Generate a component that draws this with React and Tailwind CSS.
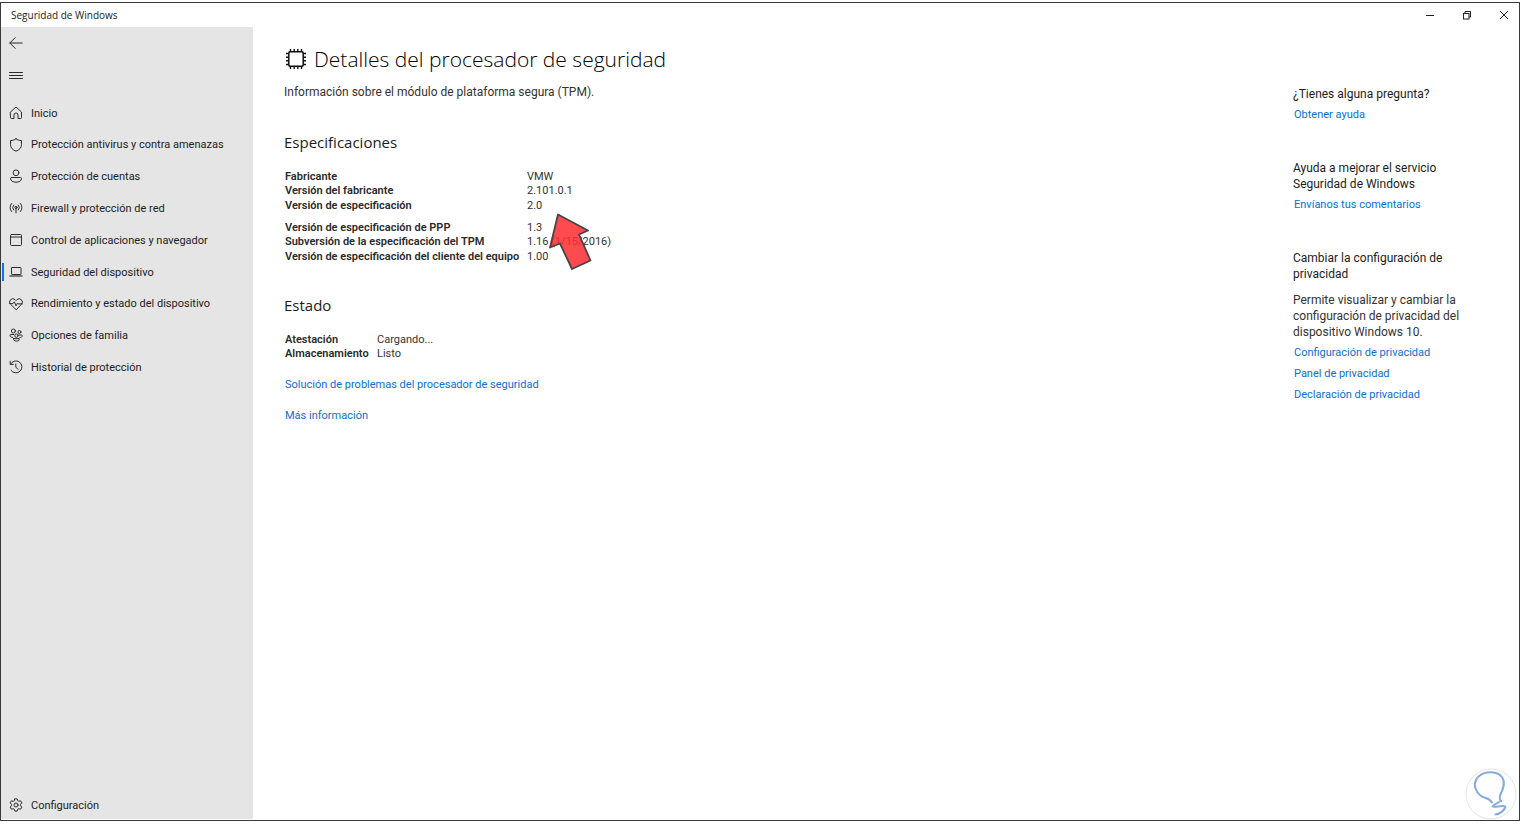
import React from "react";

function Glyph({ children }) {
  return (
    <svg
      viewBox="0 0 14 14"
      className="size-[14px] shrink-0"
      fill="none"
      stroke="#2b2b2b"
      strokeWidth="1"
      strokeLinecap="round"
      strokeLinejoin="round"
      aria-hidden="true"
    >
      {children}
    </svg>
  );
}

const icons = {
  home: <path d="M1.500 6 L7 1 L12.500 6 V11.600 Q12.500 12.500 11.600 12.500 H9 V9 a2 2 0 0 0 -4 0 V12.500 H2.400 Q1.500 12.500 1.500 11.600 Z" />,
  shield: <path d="M7 .8 C8.600 2 10.500 2.500 12.500 2.600 V6.500 C12.500 9.800 10.400 12 7 13.200 C3.600 12 1.500 9.800 1.500 6.500 V2.600 C3.500 2.500 5.400 2 7 .8 Z" />,
  account: (
    <>
      <circle cx="7" cy="3.8" r="2.9" />
      <path d="M2.600 8.500 H11.400 Q12.500 8.500 12.500 9.600 C12.500 12 10 13.200 7 13.200 S1.500 12 1.500 9.600 Q1.500 8.500 2.600 8.500 Z" />
    </>
  ),
  signal: (
    <>
      <circle cx="7" cy="6.400" r="1.100" />
      <path d="M7 7.500 V12" />
      <path d="M4.700 9 a3.600 3.600 0 0 1 0 -5 M9.300 9 a3.600 3.600 0 0 0 0 -5" />
      <path d="M2.600 10.600 a6 6 0 0 1 0 -8.200 M11.400 10.600 a6 6 0 0 0 0 -8.200" />
    </>
  ),
  browser: (
    <>
      <rect x="1.500" y="1.500" width="11" height="11" rx="1" />
      <path d="M1.500 4 H12.500" />
    </>
  ),
  laptop: (
    <>
      <rect x="2.500" y="2.500" width="9.500" height="7" rx=".6" />
      <path d="M1 11 H13" strokeWidth="1.600" stroke="#555" />
    </>
  ),
  heart: (
    <>
      <path d="M7 12.600 L1.600 7.300 A3.200 3.200 0 0 1 6.100 2.700 L7 3.600 L7.900 2.700 A3.200 3.200 0 0 1 12.400 7.300 Z" />
      <path d="M.6 6.600 H3.800 L5.300 4.800 L7 8.800 L8.600 6 L9.400 6.900 H13.400" />
    </>
  ),
  family: (
    <>
      <circle cx="4.400" cy="3" r="2" />
      <circle cx="10.400" cy="4" r="1.500" />
      <circle cx="7.400" cy="7.600" r="1.700" />
      <path d="M4.600 6.500 H1.900 Q1 6.500 1 7.300 C1 8.600 2 9.500 3.700 9.500" />
      <path d="M9.800 7 H12.400 Q13.200 7 13.200 7.700 C13.200 8.900 12.300 9.600 10.800 9.600" />
      <path d="M4.600 10.700 H10.200 Q10.900 12.900 7.400 13.100 Q4 12.900 4.600 10.700 Z" />
    </>
  ),
  history: (
    <>
      <path d="M1.200 1.200 V4.400 H4.400" />
      <path d="M1.500 4.200 A6 6 0 1 1 2 10.400" />
      <path d="M6.800 4 V7.200 L9.200 9.400" />
    </>
  ),
  gear: (
    <>
      <circle cx="7" cy="7" r="2" />
      <path d="M5.800 .9 H8.200 L8.700 2.700 L9.700 3.300 L11.600 2.800 L12.800 4.900 L11.500 6.300 V7.700 L12.800 9.100 L11.600 11.200 L9.700 10.700 L8.700 11.300 L8.200 13.100 H5.800 L5.300 11.300 L4.300 10.700 L2.400 11.200 L1.200 9.100 L2.500 7.700 V6.300 L1.200 4.900 L2.400 2.800 L4.300 3.300 L5.300 2.700 Z" />
    </>
  ),
};

const navItems = [
  { label: "Inicio", icon: "home" },
  { label: "Protección antivirus y contra amenazas", icon: "shield" },
  { label: "Protección de cuentas", icon: "account" },
  { label: "Firewall y protección de red", icon: "signal" },
  { label: "Control de aplicaciones y navegador", icon: "browser" },
  { label: "Seguridad del dispositivo", icon: "laptop", active: true },
  { label: "Rendimiento y estado del dispositivo", icon: "heart" },
  { label: "Opciones de familia", icon: "family" },
  { label: "Historial de protección", icon: "history" },
];

const makerRows = [
  ["Fabricante", "VMW"],
  ["Versión del fabricante", "2.101.0.1"],
  ["Versión de especificación", "2.0"],
];

const specRows = [
  ["Versión de especificación de PPP", "1.3"],
  ["Subversión de la especificación del TPM", "1.16 (1/15/2016)"],
  ["Versión de especificación del cliente del equipo", "1.00"],
];

const statusRows = [
  ["Atestación", "Cargando..."],
  ["Almacenamiento", "Listo"],
];

function NavLink({ label, icon, active }) {
  return (
    <a href="#" aria-current={active ? "page" : undefined} className="flex items-center">
      <span className={"mr-[5px] h-[18px] w-0.5 " + (active ? "bg-[#0f74d8]" : "bg-transparent")} />
      <Glyph>{icons[icon]}</Glyph>
      <span className="pt-0.5 pl-2 whitespace-nowrap">{label}</span>
    </a>
  );
}

function TextLink({ children, className = "" }) {
  return (
    <a href="#" className={"block w-fit pl-px text-[11px] leading-[15px] text-[#0a6fd0] " + className}>
      {children}
    </a>
  );
}

function Rows({ rows, labelClass, className = "" }) {
  return (
    <table className={"text-[11px] leading-[14px] " + className}>
      <tbody>
        {rows.map(([label, value]) => (
          <tr key={label}>
            <th
              scope="row"
              className={"p-0 pl-px text-left font-semibold whitespace-nowrap text-[#2a2a2a] " + labelClass}
            >
              {label}
            </th>
            <td className="p-0 whitespace-nowrap text-[#333]">{value}</td>
          </tr>
        ))}
      </tbody>
    </table>
  );
}

function Pointer() {
  return (
    <svg viewBox="0 0 50 62" className="absolute top-[78px] left-[261px] h-[62px] w-[50px]" aria-hidden="true">
      <path
        d="M13 4.500 L43 20.500 L34 24.500 L45.500 50.500 L27 59 L15 33.500 L5 37.500 Z"
        fill="#ff2c30"
        fillOpacity=".85"
        stroke="#4a4344"
        strokeWidth="1.800"
        strokeLinejoin="round"
      />
    </svg>
  );
}

function ChipIcon() {
  return (
    <svg viewBox="0 0 22 22" className="size-[22px] shrink-0" fill="none" stroke="#111" aria-hidden="true">
      <rect x="3.800" y="3.800" width="14.400" height="14.400" rx="1.200" strokeWidth="1.500" />
      <path
        strokeWidth="1.400"
        d="M5.500 1 V4 M9.200 1 V4 M12.800 1 V4 M16.500 1 V4 M5.500 18 V21 M9.200 18 V21 M12.800 18 V21 M16.500 18 V21 M1 5.500 H4 M1 9.200 H4 M1 12.800 H4 M1 16.500 H4 M18 5.500 H21 M18 9.200 H21 M18 12.800 H21 M18 16.500 H21"
      />
    </svg>
  );
}

function TitleBar() {
  return (
    <header className="flex h-6 items-center justify-between px-2.5 text-[#222]">
      <span className="font-['Open_Sans','Noto_Sans',sans-serif] text-[10px]">Seguridad de Windows</span>
      <div className="flex gap-[27px]">
        <button type="button" aria-label="Minimizar">
          <svg viewBox="0 0 10 10" className="size-2.5" stroke="currentColor" aria-hidden="true">
            <path d="M1 5.500 H9" />
          </svg>
        </button>
        <button type="button" aria-label="Restaurar">
          <svg viewBox="0 0 10 10" className="size-2.5" fill="none" stroke="currentColor" aria-hidden="true">
            <rect x="1.500" y="3.500" width="5.500" height="5.500" />
            <path d="M3 3.500 V1.500 H8.500 V7 H7" />
          </svg>
        </button>
        <button type="button" aria-label="Cerrar">
          <svg viewBox="0 0 10 10" className="size-2.5" stroke="currentColor" aria-hidden="true">
            <path d="M1 1 L9 9 M9 1 L1 9" />
          </svg>
        </button>
      </div>
    </header>
  );
}

export default function App() {
  return (
    <div className="flex min-h-screen flex-col bg-white pt-0.5 pb-[3px] font-[Roboto,'Open_Sans',sans-serif] text-[#1c1c1c]">
      <div className="relative flex grow flex-col border border-[#3b3b3d]">
        <TitleBar />
        <div className="flex grow pb-px">
          <aside className="flex w-[252px] shrink-0 flex-col bg-[#e5e5e5] pl-px text-[11px]">
            <button type="button" aria-label="Atrás" className="flex h-8 w-8 items-center pl-[7px]">
              <Glyph>
                <path d="M.8 7 H13.200 M6.200 1.600 L.8 7 L6.200 12.400" />
              </Glyph>
            </button>
            <button type="button" aria-label="Abrir navegación" className="flex h-8 w-8 items-center pl-[7px]">
              <Glyph>
                <path d="M.5 4.500 H13.500 M.5 7.500 H13.500 M.5 10.500 H13.500" />
              </Glyph>
            </button>
            <nav className="mt-1.5 grid h-[286px] auto-rows-fr">
              {navItems.map((item) => (
                <NavLink key={item.label} {...item} />
              ))}
            </nav>
            <div className="mt-auto grid h-7">
              <NavLink label="Configuración" icon="gear" />
            </div>
          </aside>

          <main className="grow pt-[17px] pl-[31px]">
            <h1 className="flex items-center gap-[7px] pl-px font-['Open_Sans','Noto_Sans',sans-serif] text-[21px] leading-[30px] font-light text-black">
              <ChipIcon />
              Detalles del procesador de seguridad
            </h1>
            <p className="mt-2.5 text-xs leading-4 text-[#333]">
              Información sobre el módulo de plataforma segura (TPM).
            </p>

            <section className="relative mt-8">
              <h2 className="font-['Open_Sans','Noto_Sans',sans-serif] text-[15px] leading-5">Especificaciones</h2>
              <Rows rows={makerRows} labelClass="w-[243px]" className="mt-[18px] h-[43px]" />
              <Rows rows={specRows} labelClass="w-[243px]" className="mt-2 h-[43px]" />
              <Pointer />
            </section>

            <section className="mt-[31px]">
              <h2 className="font-['Open_Sans','Noto_Sans',sans-serif] text-[15px] leading-5">Estado</h2>
              <Rows rows={statusRows} labelClass="w-[93px]" className="mt-[18px]" />
            </section>

            <TextLink className="mt-4">Solución de problemas del procesador de seguridad</TextLink>
            <TextLink className="mt-4">Más información</TextLink>
          </main>

          <aside className="w-[226px] shrink-0 pt-[59px] pr-12 text-xs leading-4">
            <section>
              <h3>¿Tienes alguna pregunta?</h3>
              <TextLink className="mt-[5px]">Obtener ayuda</TextLink>
            </section>
            <section className="mt-[38px]">
              <h3>Ayuda a mejorar el servicio Seguridad de Windows</h3>
              <TextLink className="mt-[5px]">Envíanos tus comentarios</TextLink>
            </section>
            <section className="mt-[38px]">
              <h3>Cambiar la configuración de privacidad</h3>
              <p className="mt-2.5 text-[#333]">
                Permite visualizar y cambiar la configuración de privacidad del dispositivo Windows 10.
              </p>
              <TextLink className="mt-[5px]">Configuración de privacidad</TextLink>
              <TextLink className="mt-[6px]">Panel de privacidad</TextLink>
              <TextLink className="mt-[6px]">Declaración de privacidad</TextLink>
            </section>
          </aside>
        </div>

        <svg viewBox="0 0 52 52" className="absolute right-0.5 bottom-0 size-[52px]" fill="none" aria-hidden="true">
          <circle cx="26" cy="26" r="25" fill="#fff" stroke="#e4e4e6" strokeWidth="1" />
          <path
            d="M27 34.500 C24 29 20 31 15.500 27.500 C10.500 23.500 8 17 11.500 11 C16 4 27 2.500 33.500 6 C40 10 39.500 17 37 23 C35 27 33.500 30 36 33"
            stroke="#86a9de"
            strokeWidth="2"
            strokeLinecap="round"
          />
          <path
            d="M36 33 C33 35 29 36 27.500 38.500 C30 40 37 36.500 40.500 38.500 C40 42 35 46 30.500 46.500"
            stroke="#86a9de"
            strokeWidth="2"
            strokeLinecap="round"
            strokeLinejoin="round"
          />
        </svg>
      </div>
    </div>
  );
}
